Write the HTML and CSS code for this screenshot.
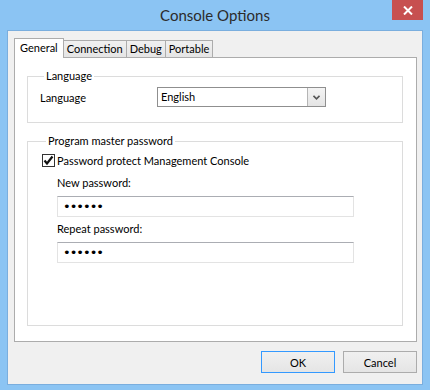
FILE: index.html
```html
<!DOCTYPE html>
<html lang="en">
<head>
    <meta charset="UTF-8">
    <title>Console Options</title>
    <link rel="stylesheet" href="styles.css">
</head>
<body>
    <div class="window">
        <div class="titlebar">
            <span class="title">Console Options</span>
            <button class="close" aria-label="Close">
                <svg width="10" height="9" viewBox="0 0 10 9"><path d="M1 0.5 L9 8.5 M9 0.5 L1 8.5" stroke="#fff" stroke-width="2"/></svg>
            </button>
        </div>
        <div class="client">
            <div class="tabs">
                <div class="tab active">General</div>
                <div class="tab">Connection</div>
                <div class="tab">Debug</div>
                <div class="tab">Portable</div>
            </div>
            <div class="panel">
                <fieldset class="group lang">
                    <legend>Language</legend>
                    <div class="row">
                        <span class="row-label">Language</span>
                        <div class="combo">
                            <span class="combo-value">English</span>
                            <span class="combo-btn">
                                <svg width="7" height="5" viewBox="0 0 7 5"><path d="M0.5 0.8 L3.5 3.8 L6.5 0.8" stroke="#555" stroke-width="1.6" fill="none"/></svg>
                            </span>
                        </div>
                    </div>
                </fieldset>
                <fieldset class="group pwd">
                    <legend>Program master password</legend>
                    <label class="check">
                        <span class="box">
                            <svg width="11" height="11" viewBox="0 0 11 11"><path d="M1.5 5.5 L4 8.5 L9.5 1.5" stroke="#111" stroke-width="2.2" fill="none"/></svg>
                        </span>
                        Password protect Management Console
                    </label>
                    <div class="fields">
                        <div class="field-label">New password:</div>
                        <input class="text" type="password" value="secret">
                        <div class="field-label second">Repeat password:</div>
                        <input class="text" type="password" value="secret">
                    </div>
                </fieldset>
            </div>
            <div class="actions">
                <button class="btn default">OK</button>
                <button class="btn">Cancel</button>
            </div>
        </div>
    </div>
</body>
</html>
```

FILE: styles.css
```css
body {
    margin: 0;
    font-family: Lato, "Noto Sans", sans-serif;
    font-size: 11px;
    color: #000;
}
.window {
    width: 430px;
    height: 390px;
    box-sizing: border-box;
    background: #8bc4f3;
    padding: 0 7px 5px 7px;
    display: flex;
    flex-direction: column;
}
.titlebar {
    height: 30px;
    position: relative;
    display: flex;
    justify-content: center;
    align-items: center;
}
.title {
    font-size: 15px;
    color: #2b2b2b;
    margin-top: -1px;
}
.close {
    position: absolute;
    top: 0;
    right: 0;
    width: 31px;
    height: 20px;
    border: none;
    padding: 0;
    background: #c75050;
    display: flex;
    align-items: center;
    justify-content: center;
}
.client {
    flex: 1;
    background: #f0f0f0;
    border: 1px solid #7aaede;
    padding: 7px 5px 0 6px;
}
.tabs {
    display: flex;
    align-items: flex-end;
    height: 19px;
}
.tab {
    height: 17px;
    box-sizing: border-box;
    padding: 0 3px;
    line-height: 16px;
    border: 1px solid #acacac;
    border-bottom: none;
    background: linear-gradient(#f0f0f0, #e5e5e5);
    margin-left: -1px;
}
.tab.active {
    height: 20px;
    margin-bottom: -1px;
    margin-left: 0;
    padding: 0 5px;
    line-height: 18px;
    background: #fff;
    position: relative;
    z-index: 1;
}
.panel {
    height: 285px;
    box-sizing: border-box;
    background: #fff;
    border: 1px solid #acacac;
    padding: 10px 13px 0 12px;
}
.group {
    margin: 0;
    padding: 0;
    border: 1px solid #dcdcdc;
}
.group legend {
    margin-left: 4px;
    padding: 0 2px;
    line-height: 16px;
}
.lang {
    padding: 3px 0 15px 12px;
}
.row {
    display: flex;
    align-items: center;
    height: 20px;
}
.row-label {
    width: 117px;
}
.combo {
    width: 169px;
    height: 20px;
    box-sizing: border-box;
    border: 1px solid #8f8f8f;
    display: flex;
}
.combo-value {
    flex: 1;
    padding-left: 3px;
    line-height: 18px;
}
.combo-btn {
    width: 17px;
    border-left: 1px solid #b5b5b5;
    background: linear-gradient(#f4f4f4, #e4e4e4);
    display: flex;
    align-items: center;
    justify-content: center;
}
.pwd {
    margin-top: 10px;
    height: 193px;
    box-sizing: border-box;
    padding: 3px 0 0 14px;
}
.check {
    display: flex;
    align-items: center;
    gap: 2px;
    height: 16px;
}
.box {
    width: 13px;
    height: 13px;
    box-sizing: border-box;
    border: 1px solid #333;
    background: #fff;
    display: flex;
    align-items: center;
    justify-content: center;
}
.fields {
    padding-left: 15px;
    margin-top: 7px;
}
.field-label {
    line-height: 16px;
    margin-bottom: 5px;
}
.field-label.second {
    margin-top: 4px;
}
.text {
    display: block;
    width: 297px;
    height: 21px;
    box-sizing: border-box;
    margin: 0;
    padding: 0 5px;
    border: 1px solid #e3e3e3;
    border-top-color: #abadb3;
    font-family: "DejaVu Sans", sans-serif;
    font-size: 13px;
    letter-spacing: -1px;
    outline: none;
}
.actions {
    display: flex;
    justify-content: flex-end;
    gap: 8px;
    margin-top: 9px;
}
.btn {
    width: 74px;
    height: 22px;
    box-sizing: border-box;
    border: 1px solid #acacac;
    background: linear-gradient(#f0f0f0, #e5e5e5);
    font-family: inherit;
    font-size: 11px;
    color: #000;
    padding: 0;
}
.btn.default {
    border-color: #3399ff;
}
```
